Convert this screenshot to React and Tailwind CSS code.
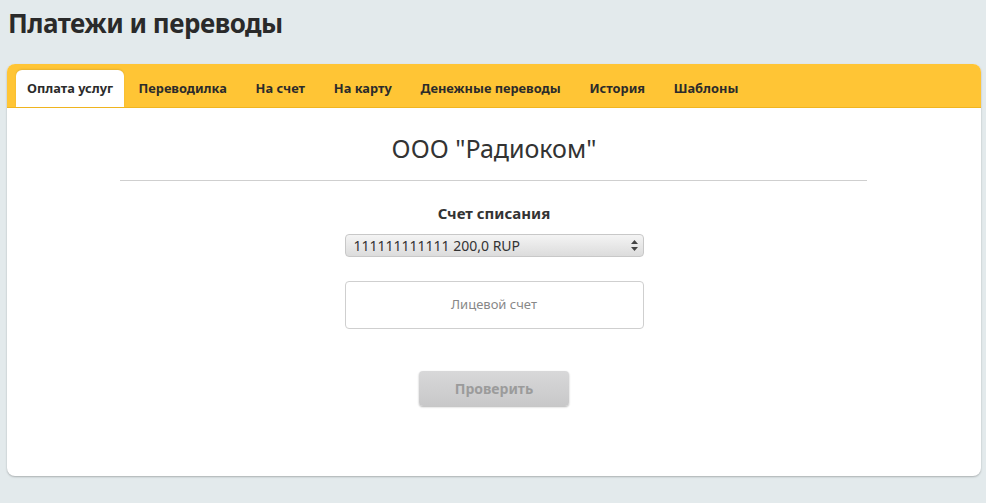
export default function App() {
  const tabs = ["Оплата услуг", "Переводилка", "На счет", "На карту", "Денежные переводы", "История", "Шаблоны"];
  return (
    <div className="w-[986px] h-[503px] bg-[#e3eaec] overflow-hidden" style={{ fontFamily: '"Noto Sans", "Open Sans", sans-serif' }}>
      <div className="pl-[7px] pr-[5px] pt-[5px]">
        <h1 className="text-[26px] font-bold text-[#2a2a2a] leading-[36px] pl-[1px] tracking-[-0.5px]">Платежи и переводы</h1>
        <div className="mt-[23px] bg-white rounded-[8px] shadow-[0_1px_2px_rgba(0,0,0,0.25)] overflow-hidden h-[412px]">
          <div className="bg-[#ffc535] h-[44px] flex items-end pl-[9px] border-b border-[#f0b520]">
            {tabs.map((t, i) => (
              <div
                key={t}
                className={
                  i === 0
                    ? "bg-white rounded-t-[6px] h-[37px] px-[11px] flex items-center text-[12.8px] font-bold text-[#2b2b2b] shadow-[0_-1px_2px_rgba(0,0,0,0.1)]"
                    : "h-[37px] px-[14.4px] flex items-center text-[12.8px] font-bold text-[#2b2b2b]"
                }
              >
                {t}
              </div>
            ))}
          </div>
          <div className="flex flex-col items-center">
            <div className="mt-[23px] text-[25px] text-[#333] leading-[34px]">ООО "Радиоком"</div>
            <div className="mt-[15px] w-[747px] h-px bg-[#cfcfcf] ml-[-1px]"></div>
            <div className="mt-[21px] text-[15px] font-bold text-[#333] leading-[22px]">Счет списания</div>
            <div className="mt-[10px] w-[299px] h-[23px] rounded-[4px] border border-[#c8c8c8] bg-gradient-to-b from-[#f4f4f4] to-[#dcdcdc] flex items-center justify-between pl-[8px] pr-[5px] text-[14px] text-[#333]">
              <span>111111111111 200,0 RUP</span>
              <svg width="7" height="11" viewBox="0 0 7 11"><path d="M3.5 0L7 4H0z M3.5 11L0 7h7z" fill="#444" /></svg>
            </div>
            <div className="mt-[24px] w-[299px] h-[48px] rounded-[4px] border border-[#cfcfcf] bg-white flex items-center justify-center text-[13px] text-[#888]">
              Лицевой счет
            </div>
            <div className="mt-[42px] w-[150px] h-[35px] rounded-[4px] bg-gradient-to-b from-[#d8d8d9] to-[#c8c8c9] shadow-[0_1px_2px_rgba(0,0,0,0.3)] flex items-center justify-center text-[14px] font-bold text-[#9b9b9b]">
              Проверить
            </div>
          </div>
        </div>
      </div>
    </div>
  );
}
